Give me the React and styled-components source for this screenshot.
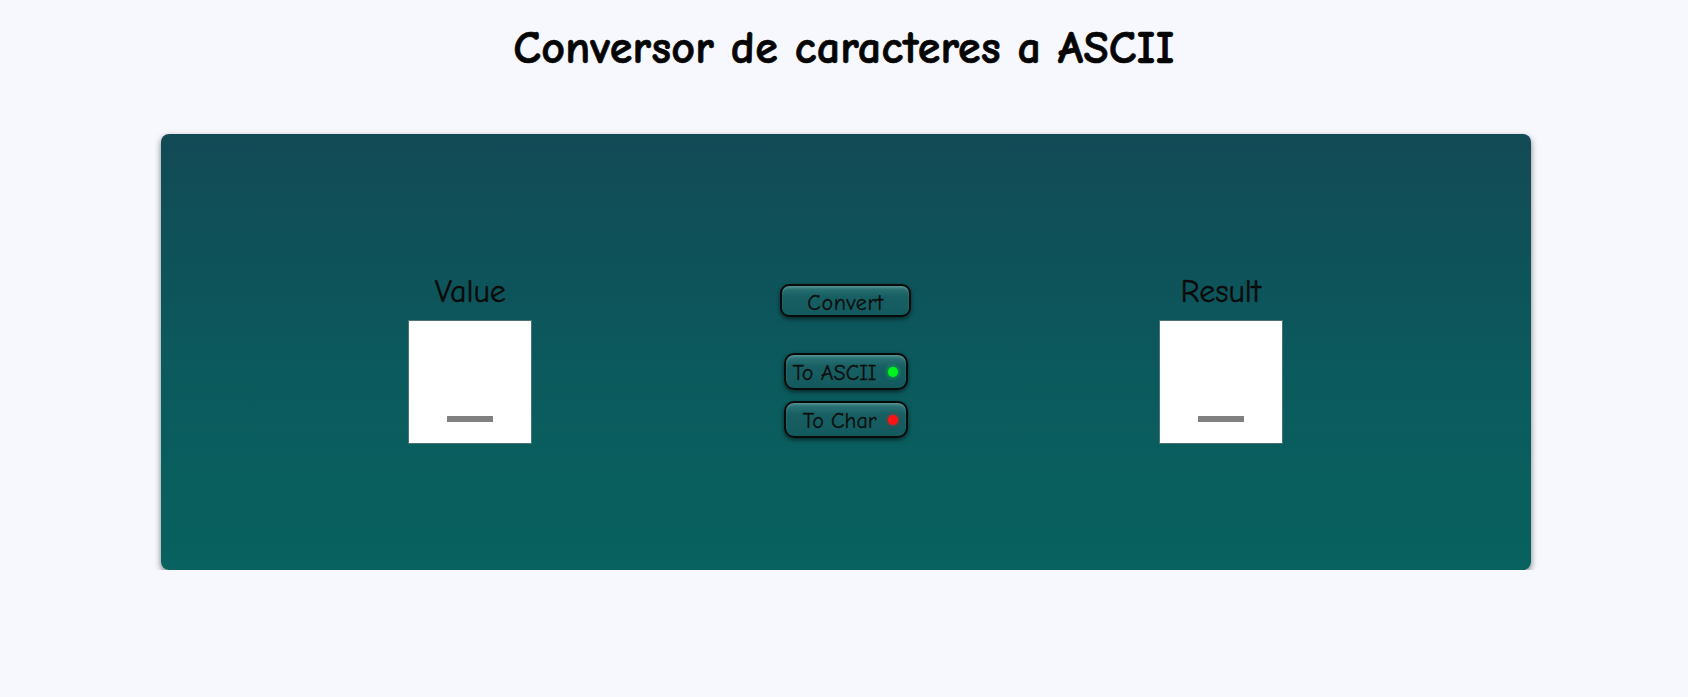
import React from "react";
import styled, { createGlobalStyle } from "styled-components";

const GlobalStyle = createGlobalStyle`
  html, body {
    margin: 0;
    padding: 0;
    background: #f7f8fd;
  }
  body {
    font-family: "Comic Sans MS", "Comic Neue", "DejaVu Sans", sans-serif;
    color: #0c0c0c;
  }
`;

const Page = styled.div`
  display: flex;
  flex-direction: column;
  align-items: center;
`;

const Title = styled.h1`
  margin: 27px 0 64px;
  font-size: 46px;
  line-height: 43px;
  font-weight: bold;
  color: #050505;
  text-align: center;
  letter-spacing: 0.3px;
  -webkit-text-stroke: 0.7px #050505;
`;

const Panel = styled.div`
  box-sizing: border-box;
  width: 1370px;
  height: 436px;
  margin-left: 3px;
  padding-top: 18px;
  border-radius: 8px;
  background: linear-gradient(to bottom, #124a56 0%, #0b5a5d 55%, #08625f 100%);
  box-shadow: 0 3px 6px rgba(0, 0, 0, 0.5);
  display: flex;
  justify-content: space-evenly;
  align-items: center;
`;

const Field = styled.div`
  width: 124px;
  display: flex;
  flex-direction: column;
  align-items: center;
`;

const Label = styled.div`
  font-size: 32px;
  line-height: 28px;
  margin-bottom: 14px;
  color: #0a0a0a;
  white-space: nowrap;
  -webkit-text-stroke: 0.4px #0a0a0a;
`;

const Box = styled.div`
  box-sizing: border-box;
  width: 124px;
  height: 124px;
  background: #ffffff;
  border: 1px solid #4c7476;
  display: flex;
  flex-direction: column;
  justify-content: flex-end;
  align-items: center;
  padding-bottom: 21px;
`;

const Caret = styled.div`
  width: 46px;
  height: 6px;
  background: #808080;
`;

const Controls = styled.div`
  width: 131px;
  display: flex;
  flex-direction: column;
  align-items: center;
`;

const ButtonBase = styled.button`
  box-sizing: border-box;
  font-family: inherit;
  color: #0d0d0d;
  font-size: 22px;
  border: 2px solid #0a0a0a;
  background: linear-gradient(to bottom, #2f7779 0%, #175f62 35%, #125a5d 100%);
  box-shadow: 0 2px 4px rgba(0, 0, 0, 0.55),
    inset 0 2px 2px rgba(255, 255, 255, 0.18);
  cursor: pointer;
  padding: 0;
  white-space: nowrap;
  -webkit-text-stroke: 0.3px #0d0d0d;
`;

const ConvertButton = styled(ButtonBase)`
  width: 131px;
  height: 33px;
  border-radius: 9px;
  margin-bottom: 36px;
  padding-top: 4px;
  letter-spacing: 0.6px;
`;

const Toggle = styled(ButtonBase)`
  width: 124px;
  height: 37px;
  border-radius: 10px;
  display: flex;
  align-items: center;
  justify-content: flex-end;
  gap: 11px;
  padding: 2px 8px 0;
  margin-bottom: ${(p) => (p.$last ? 0 : 11)}px;
`;

const Led = styled.span`
  width: 10px;
  height: 10px;
  border-radius: 50%;
  flex: none;
  margin-top: -2px;
  background: ${(p) => (p.$on ? "#00f51c" : "#ff1414")};
  box-shadow: 0 0 4px ${(p) => (p.$on ? "rgba(0,255,40,0.8)" : "rgba(255,20,20,0.8)")};
`;

export default function App() {
  return (
    <>
      <GlobalStyle />
      <Page>
        <Title>Conversor de caracteres a ASCII</Title>
        <Panel>
          <Field>
            <Label>Value</Label>
            <Box>
              <Caret />
            </Box>
          </Field>
          <Controls>
            <ConvertButton>Convert</ConvertButton>
            <Toggle>
              To ASCII
              <Led $on />
            </Toggle>
            <Toggle $last>
              To Char
              <Led />
            </Toggle>
          </Controls>
          <Field>
            <Label>Result</Label>
            <Box>
              <Caret />
            </Box>
          </Field>
        </Panel>
      </Page>
    </>
  );
}
